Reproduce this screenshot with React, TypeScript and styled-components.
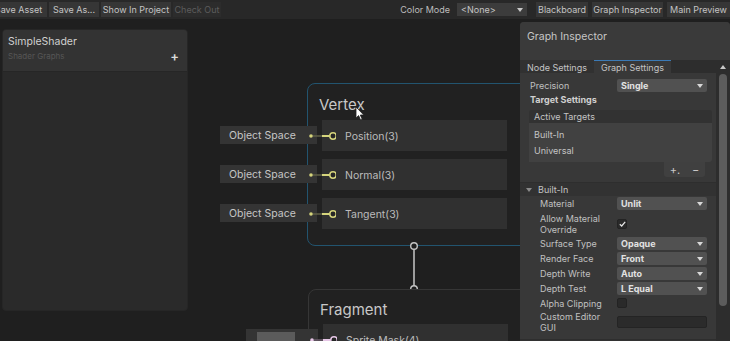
import React from 'react'
import styled, { createGlobalStyle } from 'styled-components'

const GlobalStyle = createGlobalStyle`
  html, body {
    margin: 0;
    padding: 0;
    background: #1f1f1f;
  }
  body {
    font-family: Inter, 'Noto Sans', sans-serif;
  }
`

const Page = styled.div`
  width: 730px;
  height: 341px;
  display: flex;
  flex-direction: column;
  overflow: hidden;
  background: #1f1f1f;
`

/* ---------- toolbar ---------- */

const Toolbar = styled.div`
  height: 19px;
  flex: none;
  display: flex;
  align-items: center;
  background: #282828;
  overflow: hidden;
  font-size: 9px;
  color: #c4c4c4;
`

const ToolGroup = styled.div<{ $offset?: number }>`
  display: flex;
  align-items: center;
  gap: 2px;
  margin-left: ${({ $offset }) => $offset ?? 0}px;
`

const RightGroup = styled(ToolGroup)`
  margin-left: auto;
  gap: 4px;
`

const ToolButton = styled.div<{ $disabled?: boolean; $w?: number }>`
  height: 15px;
  width: ${({ $w }) => ($w ? `${$w}px` : 'auto')};
  padding: 0 3px;
  box-sizing: border-box;
  display: flex;
  align-items: center;
  justify-content: center;
  white-space: nowrap;
  background: ${({ $disabled }) => ($disabled ? '#2c2c2c' : '#363636')};
  color: ${({ $disabled }) => ($disabled ? '#5c5c5c' : '#c4c4c4')};
`

const ToolLabel = styled.span`
  margin-right: 3px;
  color: #bdbdbd;
`

const ToolDropdown = styled.div`
  width: 70px;
  height: 13px;
  margin-right: 5px;
  padding: 0 4px;
  box-sizing: border-box;
  display: flex;
  align-items: center;
  justify-content: space-between;
  background: #3c3c3c;
  color: #c4c4c4;
`

const Arrow = ({ color = '#c8c8c8' }: { color?: string }) => (
  <svg width="6" height="4" viewBox="0 0 6 4">
    <path d="M0 0 H6 L3 4 Z" fill={color} />
  </svg>
)

/* ---------- graph canvas ---------- */

const Main = styled.div`
  flex: 1;
  display: flex;
  min-height: 0;
`

const Canvas = styled.div`
  flex: 1;
  position: relative;
  overflow: hidden;
  background: #1f1f1f;
`

const Blackboard = styled.div`
  position: absolute;
  left: 2px;
  top: 10px;
  width: 186px;
  height: 282px;
  display: flex;
  flex-direction: column;
  background: #2a2a2a;
  border: 1px solid #262626;
  border-radius: 4px;
  box-sizing: border-box;
  overflow: hidden;
`

const BlackboardHeader = styled.div`
  height: 42px;
  padding: 5px 8px 0 5px;
  box-sizing: border-box;
  background: #333333;
  border-bottom: 1px solid #262626;
  display: flex;
  flex-direction: column;
`

const BlackboardTitle = styled.div`
  font-size: 10.5px;
  line-height: 14px;
  color: #d0d0d0;
`

const BlackboardSub = styled.div`
  margin-top: 2px;
  display: flex;
  justify-content: space-between;
  align-items: center;
  font-size: 8px;
  color: #565656;
`

const AddGlyph = styled.span`
  font-size: 13px;
  font-weight: 600;
  color: #dcdcdc;
  line-height: 10px;
`

const Node = styled.div<{ $left: number; $top: number; $border: string }>`
  position: absolute;
  left: ${({ $left }) => $left}px;
  top: ${({ $top }) => $top}px;
  width: 228px;
  display: flex;
  flex-direction: column;
  background: #212121;
  border: 1px solid ${({ $border }) => $border};
  border-radius: 8px;
  padding-bottom: 16px;
`

const NodeTitle = styled.div<{ $h: number }>`
  height: ${({ $h }) => $h}px;
  line-height: ${({ $h }) => $h + 5}px;
  padding-left: 11px;
  font-size: 15px;
  color: #c8c8c8;
`

const PortList = styled.div`
  display: flex;
  flex-direction: column;
  gap: 8px;
  margin-left: 14px;
`

const PortRow = styled.div`
  position: relative;
  width: 185px;
  height: 31px;
  display: flex;
  align-items: center;
  background: #303030;
`

const PortLabel = styled.span`
  margin-left: 23px;
  margin-top: 2px;
  font-size: 10.5px;
  color: #bcbcbc;
`

const InputStub = styled.div`
  position: absolute;
  left: -102px;
  top: 6px;
  width: 97px;
  height: 18px;
  padding-left: 9px;
  box-sizing: border-box;
  display: flex;
  align-items: center;
  background: #343434;
  font-size: 10.5px;
  color: #c6c6c6;
`

const ColorStub = styled(InputStub)`
  left: -77px;
  top: 5px;
  width: 72px;
  height: 22px;
  padding: 3px 0 3px 11px;
  align-items: stretch;
`

const Swatch = styled.div`
  width: 38px;
  background: #5b5b5b;
`

const Wire = styled.svg`
  position: absolute;
  left: -18px;
  top: 11px;
`

const Edge = styled.svg`
  position: absolute;
  left: 409px;
  top: 222px;
`

const Cursor = styled.svg`
  position: absolute;
  left: 355px;
  top: 87px;
`

const PortWire = ({ color, dim }: { color: string; dim: string }) => (
  <Wire width="32" height="10" viewBox="0 0 32 10">
    <circle cx="7" cy="5" r="1.8" fill={color} />
    <line x1="9" y1="5" x2="18" y2="5" stroke={dim} strokeWidth="1.6" />
    <line x1="18" y1="5" x2="26" y2="5" stroke={color} strokeWidth="2" />
    <circle cx="29" cy="5" r="3.2" fill="#262626" stroke={color} strokeWidth="1.5" />
  </Wire>
)

/* ---------- inspector ---------- */

const Inspector = styled.div`
  width: 210px;
  flex: none;
  margin-top: 3px;
  display: flex;
  flex-direction: column;
  background: #383838;
  border-radius: 4px 4px 0 0;
  overflow: hidden;
  font-size: 9px;
  color: #c4c4c4;
`

const InspectorHeader = styled.div`
  height: 38px;
  flex: none;
  padding: 8px 7px 0;
  box-sizing: border-box;
  background: #3a3a3a;
  font-size: 10.5px;
  color: #c6c6c6;
`

const InspectorBody = styled.div`
  flex: 1;
  display: flex;
  min-height: 0;
`

const InspectorMain = styled.div`
  flex: 1;
  display: flex;
  flex-direction: column;
`

const Tabs = styled.div`
  height: 13px;
  flex: none;
  display: flex;
  background: #2d2d2d;
`

const Tab = styled.div<{ $active?: boolean }>`
  padding: 0 7px;
  display: flex;
  align-items: center;
  white-space: nowrap;
  background: ${({ $active }) => ($active ? '#383838' : '#313131')};
  border-top: 1px solid ${({ $active }) => ($active ? '#3b7ab6' : 'transparent')};
  box-sizing: border-box;
`

const Content = styled.div`
  padding-top: 5px;
  display: flex;
  flex-direction: column;
`

const Row = styled.div<{ $h?: number; $indent?: number }>`
  height: ${({ $h }) => $h ?? 15}px;
  display: flex;
  align-items: center;
  padding-left: ${({ $indent }) => $indent ?? 20}px;
  padding-right: 9px;
`

const Label = styled.div<{ $w?: number }>`
  width: ${({ $w }) => $w ?? 77}px;
  flex: none;
  line-height: 11px;
  color: #c0c0c0;
`

const Select = styled.div`
  width: 90px;
  height: 13px;
  padding: 0 4px;
  box-sizing: border-box;
  display: flex;
  align-items: center;
  justify-content: space-between;
  background: #515151;
  border-radius: 2px;
  font-weight: 700;
  color: #e2e2e2;
`

const TextField = styled.div`
  width: 90px;
  height: 12px;
  background: #2b2b2b;
  border: 1px solid #242424;
  border-radius: 2px;
  box-sizing: border-box;
`

const Check = styled.div`
  width: 10px;
  height: 10px;
  display: flex;
  align-items: center;
  justify-content: center;
  background: #2a2a2a;
  border: 1px solid #232323;
  border-radius: 2px;
  box-sizing: border-box;
`

const Heading = styled.div`
  height: 13px;
  padding-left: 10px;
  display: flex;
  align-items: center;
  font-weight: 700;
  color: #d0d0d0;
`

const TargetList = styled.div`
  margin: 4px 4px 0 9px;
  display: flex;
  flex-direction: column;
`

const TargetHeader = styled.div`
  height: 13px;
  padding-left: 5px;
  display: flex;
  align-items: center;
  background: #323232;
  border-radius: 3px 3px 0 0;
`

const TargetItems = styled.div`
  height: 39px;
  padding: 3px 5px 0;
  box-sizing: border-box;
  display: flex;
  flex-direction: column;
  background: #414141;
  border-radius: 0 0 3px 0;
`

const TargetItem = styled.div`
  height: 16px;
  display: flex;
  align-items: center;
`

const TargetFooter = styled.div`
  align-self: flex-end;
  width: 41px;
  height: 15px;
  margin-right: 7px;
  display: flex;
  align-items: center;
  justify-content: space-around;
  background: #404040;
  border-radius: 0 0 3px 3px;
  font-size: 11px;
  color: #c8c8c8;
`

const Foldout = styled.div`
  height: 14px;
  margin-top: 5px;
  padding-left: 6px;
  display: flex;
  align-items: center;
  gap: 6px;
  background: #323232;
  border-top: 1px solid #2e2e2e;
  box-sizing: border-box;
`

const Scrollbar = styled.div`
  width: 14px;
  flex: none;
  display: flex;
  flex-direction: column;
  align-items: center;
  background: #2d2d2d;
`

const ScrollArrow = styled.div`
  height: 14px;
  display: flex;
  align-items: center;
`

const ScrollThumb = styled.div`
  width: 8px;
  height: 232px;
  border-radius: 4px;
  background: #5c5c5c;
`

const Dropdown = ({ value }: { value: string }) => (
  <Select>
    <span>{value}</span>
    <Arrow color="#d8d8d8" />
  </Select>
)

const vertexPorts = ['Position(3)', 'Normal(3)', 'Tangent(3)']

const fields: { label: string; value: string }[] = [
  { label: 'Surface Type', value: 'Opaque' },
  { label: 'Render Face', value: 'Front' },
  { label: 'Depth Write', value: 'Auto' },
  { label: 'Depth Test', value: 'L Equal' },
]

const yellow = '#d5d47c'

export default function App() {
  return (
    <Page>
      <GlobalStyle />
      <Toolbar>
        <ToolGroup $offset={-10}>
          <ToolButton $w={57}>Save Asset</ToolButton>
          <ToolButton $w={50}>Save As...</ToolButton>
          <ToolButton $w={70}>Show In Project</ToolButton>
          <ToolButton $w={48} $disabled>Check Out</ToolButton>
        </ToolGroup>
        <RightGroup>
          <ToolLabel>Color Mode</ToolLabel>
          <ToolDropdown>
            <span>&lt;None&gt;</span>
            <Arrow />
          </ToolDropdown>
          <ToolButton $w={52}>Blackboard</ToolButton>
          <ToolButton $w={71}>Graph Inspector</ToolButton>
          <ToolButton $w={63}>Main Preview</ToolButton>
        </RightGroup>
      </Toolbar>

      <Main>
        <Canvas>
          <Blackboard>
            <BlackboardHeader>
              <BlackboardTitle>SimpleShader</BlackboardTitle>
              <BlackboardSub>
                <span>Shader Graphs</span>
                <AddGlyph>+</AddGlyph>
              </BlackboardSub>
            </BlackboardHeader>
          </Blackboard>

          <Node $left={307} $top={64} $border="#22546f">
            <NodeTitle $h={36}>Vertex</NodeTitle>
            <PortList>
              {vertexPorts.map((p) => (
                <PortRow key={p}>
                  <InputStub>Object Space</InputStub>
                  <PortWire color={yellow} dim="#5d5d45" />
                  <PortLabel>{p}</PortLabel>
                </PortRow>
              ))}
            </PortList>
          </Node>

          <Edge width="10" height="54" viewBox="0 0 10 54">
            <line x1="5" y1="8" x2="5" y2="45" stroke="#bdbdbd" strokeWidth="1.6" />
            <circle cx="5" cy="5" r="3.3" fill="#1f1f1f" stroke="#c4c4c4" strokeWidth="1.4" />
            <circle cx="5" cy="48" r="3.3" fill="#1f1f1f" stroke="#c4c4c4" strokeWidth="1.4" />
          </Edge>

          <Node $left={308} $top={270} $border="#363636">
            <NodeTitle $h={34}>Fragment</NodeTitle>
            <PortList>
              <PortRow>
                <ColorStub>
                  <Swatch />
                </ColorStub>
                <PortWire color="#e6c6e6" dim="#6a5a6a" />
                <PortLabel>Sprite Mask(4)</PortLabel>
              </PortRow>
            </PortList>
          </Node>

          <Cursor width="10" height="15" viewBox="0 0 10 15">
            <path d="M1 1 L1 12 L3.6 9.6 L5.6 14 L7.2 13.3 L5.3 9 L8.8 9 Z" fill="#ffffff" stroke="#222" strokeWidth="0.8" />
          </Cursor>
        </Canvas>

        <Inspector>
          <InspectorHeader>Graph Inspector</InspectorHeader>
          <InspectorBody>
            <InspectorMain>
              <Tabs>
                <Tab>Node Settings</Tab>
                <Tab $active>Graph Settings</Tab>
              </Tabs>
              <Content>
                <Row $indent={10}>
                  <Label $w={87}>Precision</Label>
                  <Dropdown value="Single" />
                </Row>
                <Heading>Target Settings</Heading>
                <TargetList>
                  <TargetHeader>Active Targets</TargetHeader>
                  <TargetItems>
                    <TargetItem>Built-In</TargetItem>
                    <TargetItem>Universal</TargetItem>
                  </TargetItems>
                  <TargetFooter>
                    <span>+.</span>
                    <span>−</span>
                  </TargetFooter>
                </TargetList>
                <Foldout>
                  <Arrow color="#8a8a8a" />
                  <span>Built-In</span>
                </Foldout>
                <Row>
                  <Label>Material</Label>
                  <Dropdown value="Unlit" />
                </Row>
                <Row $h={25}>
                  <Label>
                    Allow Material
                    <br />
                    Override
                  </Label>
                  <Check>
                    <svg width="7" height="6" viewBox="0 0 7 6">
                      <path d="M0.8 3.2 L2.7 5 L6.2 0.8" fill="none" stroke="#e8e8e8" strokeWidth="1.2" />
                    </svg>
                  </Check>
                </Row>
                {fields.map((f) => (
                  <Row key={f.label}>
                    <Label>{f.label}</Label>
                    <Dropdown value={f.value} />
                  </Row>
                ))}
                <Row $h={14}>
                  <Label>Alpha Clipping</Label>
                  <Check />
                </Row>
                <Row $h={24}>
                  <Label>
                    Custom Editor
                    <br />
                    GUI
                  </Label>
                  <TextField />
                </Row>
                <Foldout>
                  <Arrow color="#8a8a8a" />
                  <span>Universal</span>
                </Foldout>
              </Content>
            </InspectorMain>
            <Scrollbar>
              <ScrollArrow>
                <svg width="6" height="4" viewBox="0 0 6 4">
                  <path d="M0 4 H6 L3 0 Z" fill="#c8c8c8" />
                </svg>
              </ScrollArrow>
              <ScrollThumb />
            </Scrollbar>
          </InspectorBody>
        </Inspector>
      </Main>
    </Page>
  )
}
